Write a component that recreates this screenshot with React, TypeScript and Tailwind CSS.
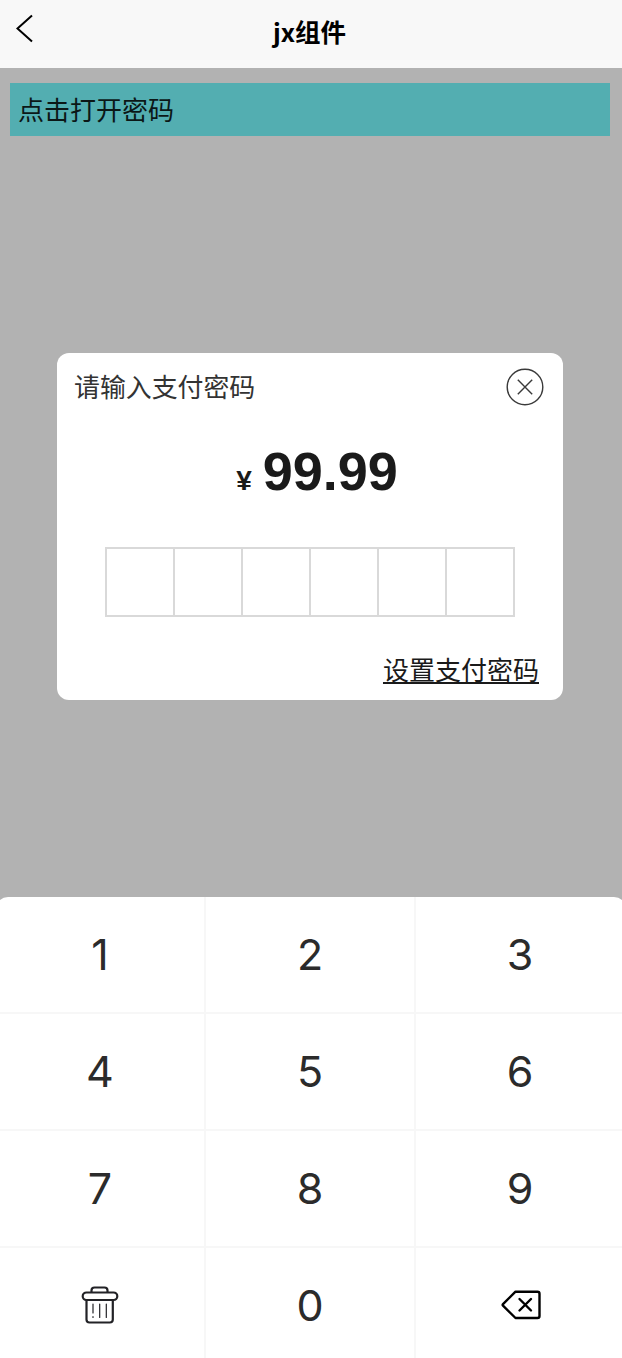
import React from "react";

const cjk = "font-['Liberation_Sans','Noto_Sans_CJK_SC',sans-serif]";

function BackIcon() {
  return (
    <svg width="20" height="32" viewBox="0 0 20 32" fill="none" stroke="#000" strokeWidth="2">
      <path d="M18 2.500 3.500 15.500 18 28.500" />
    </svg>
  );
}

function CloseIcon() {
  return (
    <svg width="38" height="38" viewBox="0 0 38 38" fill="none" stroke="#3a3a3a" strokeWidth="1.4">
      <circle cx="19" cy="19" r="17.8" />
      <path d="M11.800 11.800 26.200 26.200M26.200 11.800 11.800 26.200" />
    </svg>
  );
}

function TrashIcon() {
  return (
    <svg className="mr-px mb-[2px]" width="38" height="38" viewBox="0 0 38 38" fill="none" stroke="#222226" strokeWidth="2.2" strokeLinecap="round" strokeLinejoin="round">
      <path d="M10.5 6V4.5Q10.500 1.500 13.500 1.500H23.500Q26.500 1.500 26.500 4.500V6" />
      <rect x="1.700" y="6.500" width="34.600" height="7.500" rx="3.750" />
      <path d="M5.500 14V33.500Q5.500 36.500 8.500 36.500H28.800Q31.800 36.500 31.800 33.500V14" />
      <path d="M12 18V27M12 30.500V31.500M18.700 18V31.500M25.300 18V31.500" strokeWidth="1.200" />
    </svg>
  );
}

function DeleteIcon() {
  return (
    <svg className="mb-[2px] ml-px" width="40" height="30" viewBox="0 0 40 30" fill="none" stroke="#000" strokeWidth="2.400" strokeLinecap="round" strokeLinejoin="round">
      <path d="M14.500 1.700H36.500Q38.500 1.700 38.500 3.700V26Q38.500 28 36.500 28H14.500L2 15.700Q1.200 14.900 2 14.100Z" />
      <path d="M18.500 9 30 20.500M30 9 18.500 20.500" />
    </svg>
  );
}

const keys: { id: string; content: React.ReactNode }[] = [
  ..."123456789".split("").map((n) => ({ id: n, content: n })),
  { id: "clear", content: <TrashIcon /> },
  { id: "0", content: "0" },
  { id: "delete", content: <DeleteIcon /> },
];

export default function App() {
  return (
    <div className={`flex h-[1358px] w-full flex-col overflow-hidden bg-[#b2b2b2] ${cjk}`}>
      <header className="grid h-[68px] shrink-0 grid-cols-[60px_1fr_60px] items-center bg-[#f8f8f8]">
        <button className="mb-[11px] ml-[14px] w-5">
          <BackIcon />
        </button>
        <h1 className="mb-[6px] pr-[3px] text-center font-['Noto_Sans_CJK_SC',sans-serif] text-[25.500px] leading-[36px] font-bold text-black">jx组件</h1>
      </header>

      <button className="mt-[15px] mr-[12px] ml-[10px] flex h-[53px] shrink-0 items-center bg-[#53aeb1] pt-[4px] pl-2 text-left text-[26px] text-[#0b1717]">
        点击打开密码
      </button>

      <section className="mt-[217px] ml-[57px] flex h-[347px] w-[506px] shrink-0 flex-col rounded-[12px] bg-white">
        <div className="flex h-[68px] items-center justify-between pr-[19px] pl-[17px]">
          <h2 className="pt-[2px] text-[25.900px] text-[#333]">请输入支付密码</h2>
          <button><CloseIcon /></button>
        </div>
        <div className="mt-[16px] flex h-[68px] items-baseline justify-center gap-[11px] pl-[14px] font-bold text-[#1a1a1a]">
          <span className="text-[28px]">¥</span>
          <span className="text-[54px] leading-[69px]">99.99</span>
        </div>
        <div className="mt-[42px] ml-[48px] flex h-[70px] w-[410px] border-2 border-r-0 border-[#d9d9d9]">
          {[0, 1, 2, 3, 4, 5].map((i) => (
            <div key={i} className="flex-1 border-r-2 border-[#d9d9d9]" />
          ))}
        </div>
        <a className="mt-[35px] mr-[24px] self-end text-[26px] leading-[38px] text-[#1a1a1a] underline decoration-2 underline-offset-[2px] [text-decoration-skip-ink:none]">
          设置支付密码
        </a>
      </section>

      <div className="mt-[197px] -ml-[4px] grid w-[630px] shrink-0 grid-cols-3 overflow-hidden rounded-t-[12px] bg-white">
        {keys.map((k) => (
          <button key={k.id} className="flex h-[117px] items-center justify-center border-r-2 border-b-2 border-[#f7f7f7] font-['Inter',sans-serif] text-[43px] text-[#2b2b2b]">
            {k.content}
          </button>
        ))}
      </div>
    </div>
  );
}
